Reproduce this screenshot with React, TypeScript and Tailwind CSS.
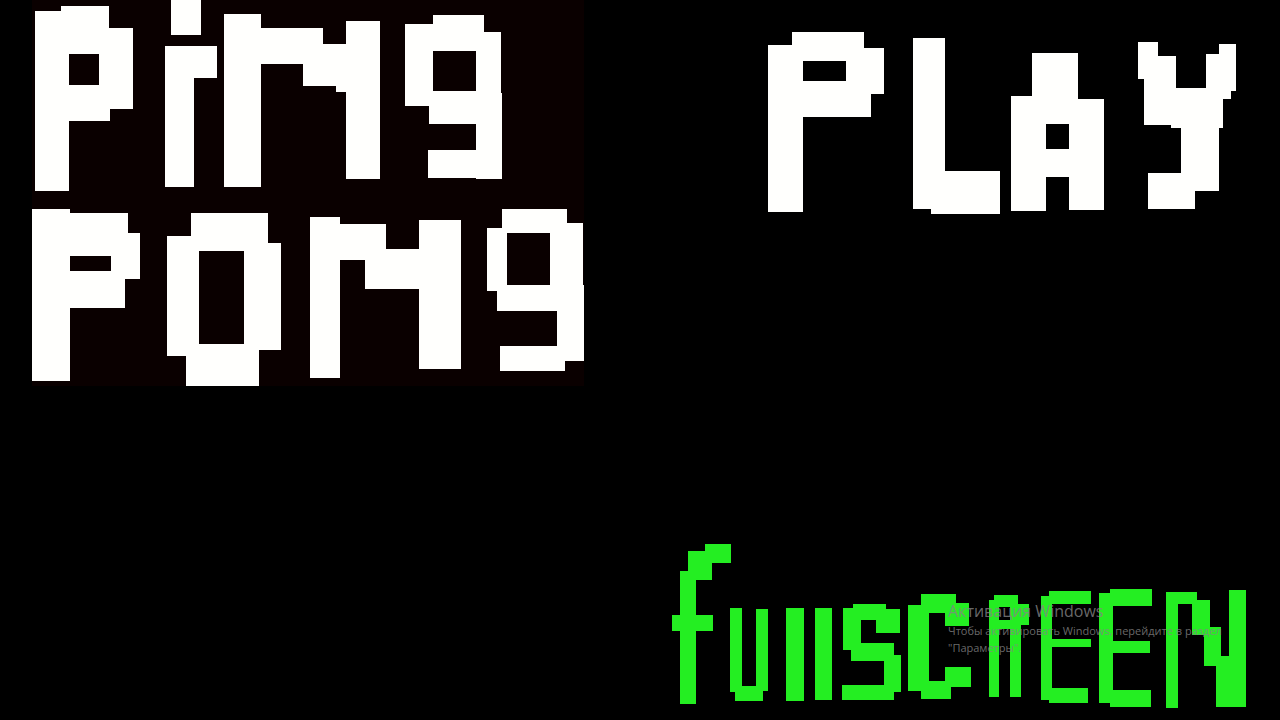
type Block = [x: number, y: number, width: number, height: number];

const TITLE_BLOCKS: Block[] = [
  // ping
  [35, 11, 34, 180], [61, 6, 48, 48], [99, 28, 34, 81], [69, 85, 41, 36],
  [171, 0, 30, 35], [165, 46, 52, 32], [165, 46, 29, 141],
  [224, 14, 37, 173], [261, 28, 62, 36], [303, 44, 43, 42], [336, 44, 44, 48], [346, 21, 34, 158],
  [405, 24, 28, 82], [433, 15, 51, 36], [476, 32, 25, 61], [429, 91, 72, 33], [476, 93, 26, 86], [428, 150, 74, 28],
  // pong
  [32, 209, 38, 172], [70, 213, 58, 43], [111, 233, 29, 46], [70, 271, 55, 37],
  [191, 213, 77, 38], [167, 236, 32, 120], [244, 243, 37, 107], [186, 344, 73, 42],
  [310, 217, 30, 161], [340, 224, 46, 36], [365, 249, 54, 40], [419, 220, 42, 149],
  [487, 228, 20, 63], [502, 209, 65, 24], [550, 223, 33, 62], [497, 285, 87, 26], [557, 285, 27, 76], [500, 346, 65, 25],
];

const PLAY_BLOCKS: Block[] = [
  [768, 45, 35, 167], [792, 32, 72, 29], [846, 48, 38, 46], [803, 81, 68, 36],
  [913, 38, 32, 171], [931, 171, 69, 43],
  [1032, 53, 46, 71], [1011, 96, 67, 28], [1011, 96, 35, 115], [1069, 99, 35, 111], [1046, 149, 23, 28],
  [1138, 42, 20, 37], [1144, 56, 32, 69], [1219, 44, 17, 47], [1206, 54, 25, 45],
  [1144, 88, 79, 37], [1171, 110, 52, 18], [1181, 128, 38, 63], [1148, 173, 47, 36],
];

const FULLSCREEN_BLOCKS: Block[] = [
  [705, 544, 26, 19], [688, 551, 24, 29], [680, 571, 16, 133], [672, 615, 41, 16],
  [730, 608, 12, 84], [756, 609, 12, 82], [730, 686, 38, 5], [735, 686, 28, 15],
  [786, 608, 18, 93], [815, 608, 17, 92],
  [853, 604, 33, 16], [843, 608, 18, 42], [876, 609, 24, 24], [851, 643, 43, 18], [884, 655, 17, 37], [842, 685, 52, 15],
  [921, 594, 35, 19], [908, 605, 21, 86], [945, 603, 24, 23], [921, 681, 30, 18], [945, 667, 26, 20],
  [994, 595, 24, 12], [989, 600, 10, 97], [1010, 604, 19, 21], [989, 620, 29, 9], [1010, 620, 11, 77],
  [1041, 596, 11, 104], [1049, 591, 42, 13], [1052, 639, 39, 8], [1049, 688, 39, 15],
  [1099, 593, 14, 110], [1110, 589, 42, 17], [1113, 641, 37, 12], [1110, 690, 41, 17],
  [1166, 592, 31, 12], [1166, 592, 12, 116], [1192, 600, 18, 35], [1204, 627, 17, 39], [1216, 656, 30, 51], [1229, 590, 17, 117],
];

function Sprite({ label, viewBox, blocks, className }: { label: string; viewBox: string; blocks: Block[]; className: string }) {
  return (
    <svg role="img" aria-label={label} viewBox={viewBox} className={className} fill="currentColor" shapeRendering="crispEdges">
      {blocks.map(([x, y, width, height]) => (
        <rect key={`${x}-${y}-${width}-${height}`} x={x} y={y} width={width} height={height} />
      ))}
    </svg>
  );
}

function ActivationNotice() {
  return (
    <div className="pointer-events-none absolute left-[276px] top-[56px] whitespace-nowrap font-['Open_Sans',sans-serif] text-[#858585]/80">
      <p className="text-base leading-[22px]">Активация Windows</p>
      <p className="text-[11px] leading-[17px]">
        Чтобы активировать Windows, перейдите в раздел
        <br />
        "Параметры".
      </p>
    </div>
  );
}

export default function App() {
  return (
    <main className="flex min-h-screen flex-col justify-between bg-black">
      <div className="flex items-start justify-between pl-8 pr-11">
        <h1 className="bg-[#0a0000] text-[#fffffd]">
          <Sprite label="Ping Pong" viewBox="32 0 552 386" blocks={TITLE_BLOCKS} className="block w-[552px]" />
        </h1>
        <button type="button" className="mt-8 cursor-pointer text-[#fffffd]">
          <Sprite label="Play" viewBox="768 32 468 182" blocks={PLAY_BLOCKS} className="block w-[468px]" />
        </button>
      </div>

      <div className="relative mr-[34px] self-end pb-3">
        <button type="button" className="block cursor-pointer text-[#24ee22]">
          <Sprite label="Fullscreen" viewBox="672 544 574 164" blocks={FULLSCREEN_BLOCKS} className="block w-[574px]" />
        </button>
        <ActivationNotice />
      </div>
    </main>
  );
}
